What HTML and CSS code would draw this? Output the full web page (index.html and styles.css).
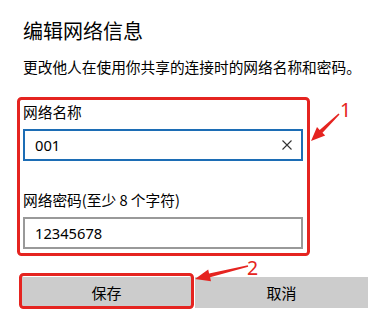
FILE: index.html
```html
<!DOCTYPE html>
<html lang="zh-CN">
<head>
<meta charset="utf-8">
<title>编辑网络信息</title>
<link rel="stylesheet" href="styles.css">
</head>
<body>
<div class="page">
  <h1 class="title">编辑网络信息</h1>
  <p class="desc">更改他人在使用你共享的连接时的网络名称和密码。</p>
  <div class="form">
    <div class="label">网络名称</div>
    <div class="input focused">
      <span class="value">001</span>
      <svg class="clear" width="10" height="10" viewBox="0 0 10 10"><path d="M0.5 0.5 L9.5 9.5 M9.5 0.5 L0.5 9.5" stroke="#333" stroke-width="1.1" fill="none"/></svg>
    </div>
    <div class="label second">网络密码(至少 8 个字符)</div>
    <div class="input">
      <span class="value">12345678</span>
    </div>
  </div>
  <div class="buttons">
    <button class="btn">保存</button>
    <button class="btn">取消</button>
  </div>
  <svg class="annot" width="391" height="332" viewBox="0 0 391 332">
    <rect x="18.5" y="98.5" width="290" height="156" rx="3" fill="none" stroke="#e52420" stroke-width="3"/>
    <rect x="20.5" y="274.5" width="172" height="33" rx="3" fill="none" stroke="#e52420" stroke-width="3"/>
    <polygon points="311,141 317,127 319.7,129.9 338.5,113.5 339.5,114.5 322.5,132.7 325.2,135.6" fill="#e52420"/>
    <polygon points="195,279 208.2,269.6 209.1,273.5 247.8,265.2 248.2,266.8 210.1,277.3 211,281.2" fill="#e52420"/>
    <text x="340" y="117" class="num">1</text>
    <text x="247" y="275" class="num">2</text>
  </svg>
</div>
</body>
</html>
```
FILE: styles.css
```css
* { box-sizing: border-box; }
html, body { margin: 0; padding: 0; background: #fff; }
.page {
  position: relative;
  width: 391px;
  height: 332px;
  overflow: hidden;
  padding: 17px 0 0 23px;
  font-family: "Noto Sans", "Noto Sans CJK SC", sans-serif;
  color: #000;
}
.title {
  margin: 0;
  font-family: "Noto Sans CJK SC", sans-serif;
  font-weight: 400;
  font-size: 20px;
  line-height: 28px;
}
.desc {
  margin: 11.5px 0 0;
  font-family: "Noto Sans CJK SC", sans-serif;
  font-size: 14.7px;
  line-height: 20px;
}
.form {
  margin-top: 25px;
  width: 280px;
  display: flex;
  flex-direction: column;
}
.label {
  font-family: "Noto Sans CJK SC", sans-serif;
  font-size: 14.7px;
  line-height: 20px;
  margin-bottom: 7.5px;
}
.label.second { margin-top: 28.5px; }
.input {
  height: 32px;
  border: 2px solid #999;
  display: flex;
  align-items: center;
  padding: 0 9px 0 10px;
  font-size: 14.7px;
}
.input.focused { border-color: #1c6db5; }
.value { flex: 1; font-family: "Noto Sans", sans-serif; }
.clear { display: block; }
.buttons {
  margin: 28px 0 0 -3px;
  width: 348px;
  display: flex;
  gap: 2px;
}
.btn {
  flex: 1;
  height: 31px;
  border: none;
  background: #ccc;
  font-family: "Noto Sans CJK SC", sans-serif;
  font-size: 15px;
  color: #000;
  padding: 0;
}
.annot {
  position: absolute;
  top: 0;
  left: 0;
  pointer-events: none;
}
.num {
  font-family: "Noto Sans", sans-serif;
  font-size: 19.5px;
  fill: #e52420;
}
```
